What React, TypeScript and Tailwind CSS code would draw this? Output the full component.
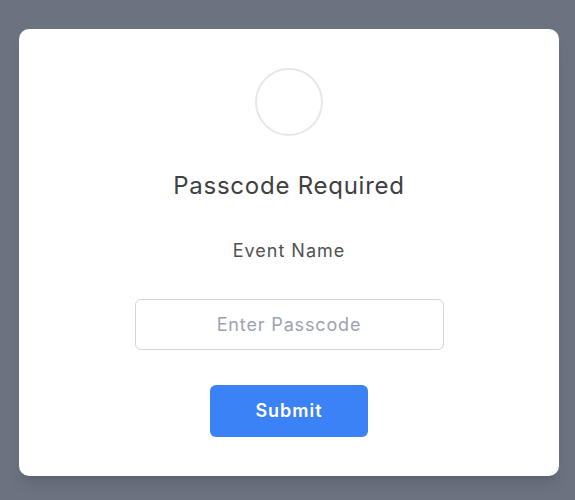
import React, { useState } from "react";

export default function App() {
  const [passcode, setPasscode] = useState("");

  return (
    <div className="min-h-[500px] w-full bg-[#6b7280] pt-[29px] pl-[19px] pr-[16px] font-['Inter',_'Open_Sans',_sans-serif]">
      <div className="flex h-[447px] w-[540px] flex-col items-center rounded-[10px] bg-white pt-[39px] shadow-lg">
        <div className="h-[68px] w-[68px] rounded-full border-2 border-gray-200" />
        <h1 className="mt-[34px] text-2xl leading-8 tracking-[0.75px] text-[#404040]">
          Passcode Required
        </h1>
        <p className="mt-[35px] text-lg leading-7 tracking-[1px] text-[#525252]">
          Event Name
        </p>
        <form
          className="mt-[34px] flex flex-col items-center"
          onSubmit={(e) => e.preventDefault()}
        >
          <input
            type="password"
            placeholder="Enter Passcode"
            value={passcode}
            onChange={(e) => setPasscode(e.target.value)}
            className="h-[51px] w-[309px] rounded-md border border-gray-300 px-4 text-center text-lg tracking-[0.85px] text-gray-700 placeholder-[#9ca3af] outline-none"
          />
          <button
            type="submit"
            className="mt-[35px] h-[52px] w-[158px] rounded-md bg-[#3b82f6] text-lg font-semibold tracking-[1px] text-white"
          >
            Submit
          </button>
        </form>
      </div>
    </div>
  );
}
